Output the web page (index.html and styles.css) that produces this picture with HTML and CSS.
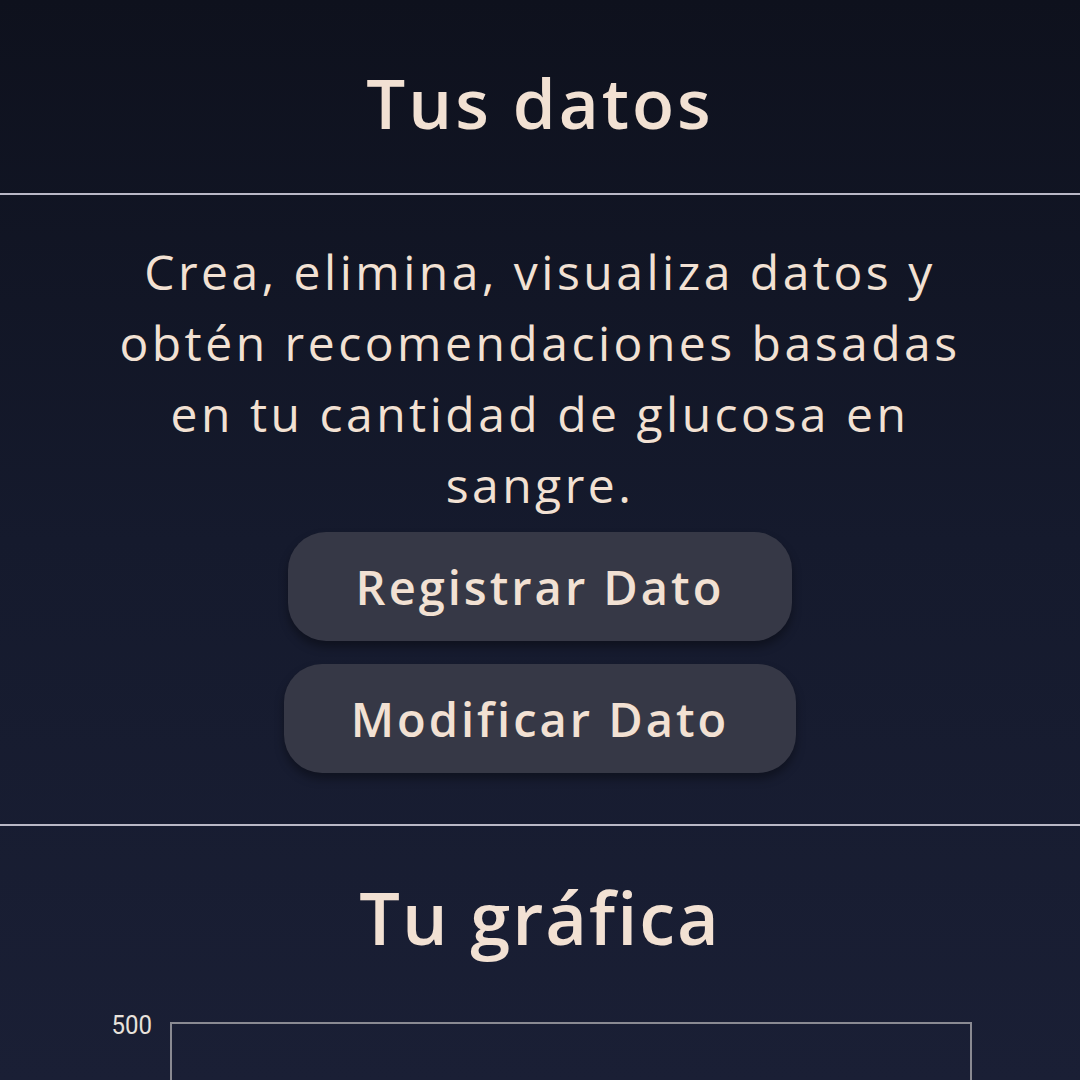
FILE: index.html
```html
<!DOCTYPE html>
<html lang="es">
<head>
<meta charset="utf-8">
<link rel="stylesheet" href="styles.css">
</head>
<body>
<main class="page">
  <header class="top">
    <h1 class="title">Tus datos</h1>
  </header>
  <section class="data">
    <p class="intro">Crea, elimina, visualiza datos y<br>obtén recomendaciones basadas<br>en tu cantidad de glucosa en<br>sangre.</p>
    <button class="btn btn-a">Registrar Dato</button>
    <button class="btn btn-b">Modificar Dato</button>
  </section>
  <section class="chart-sec">
    <h2 class="title2">Tu gráfica</h2>
    <div class="chart">
      <span class="ylabel">500</span>
      <div class="plot"></div>
    </div>
  </section>
</main>
</body>
</html>
```
FILE: styles.css
```css
html, body {
  margin: 0;
  padding: 0;
  height: 100%;
}
body {
  background: linear-gradient(180deg, #0e111d 0%, #151a2d 50%, #1a1f35 100%);
  color: #f2e1d3;
  font-family: "Open Sans", "DejaVu Sans", sans-serif;
  overflow: hidden;
}
.page {
  display: flex;
  flex-direction: column;
}
.top {
  height: 193px;
  display: flex;
  align-items: center;
  justify-content: center;
  border-bottom: 2px solid #b9b8c6;
}
.title {
  margin: 0;
  font-size: 69px;
  font-weight: 600;
  letter-spacing: 3px;
  line-height: 1;
  transform: translateY(6px);
}
.data {
  display: flex;
  flex-direction: column;
  align-items: center;
  padding: 41px 0 51px;
  border-bottom: 2px solid #b9b8c6;
}
.intro {
  margin: 0 0 12px;
  text-align: center;
  font-size: 48px;
  line-height: 71px;
  letter-spacing: 3.5px;
  font-weight: 400;
}
.btn {
  font-family: inherit;
  color: #f2e1d3;
  background: #363846;
  border: none;
  border-radius: 38px;
  height: 109px;
  font-size: 47px;
  font-weight: 600;
  letter-spacing: 3px;
  box-shadow: 0 6px 10px rgba(0,0,0,0.35);
}
.btn-a { width: 504px; }
.btn-b { width: 512px; margin-top: 23px; }
.chart-sec {
  display: flex;
  flex-direction: column;
  align-items: center;
  padding-top: 46px;
}
.title2 {
  margin: 0;
  font-size: 72px;
  font-weight: 600;
  letter-spacing: 2px;
  line-height: 90px;
}
.chart {
  width: 100%;
  display: flex;
  margin-top: 60px;
}
.ylabel {
  font-family: Roboto, sans-serif;
  font-size: 24px;
  line-height: 1;
  color: #e8e2dc;
  width: 170px;
  text-align: right;
  padding-right: 18px;
  box-sizing: border-box;
  margin-top: 0;
  transform: scaleY(1.1);
}
.plot {
  width: 802px;
  height: 200px;
  border: 2px solid #8a8a92;
  border-bottom: none;
  box-sizing: border-box;
}
```
